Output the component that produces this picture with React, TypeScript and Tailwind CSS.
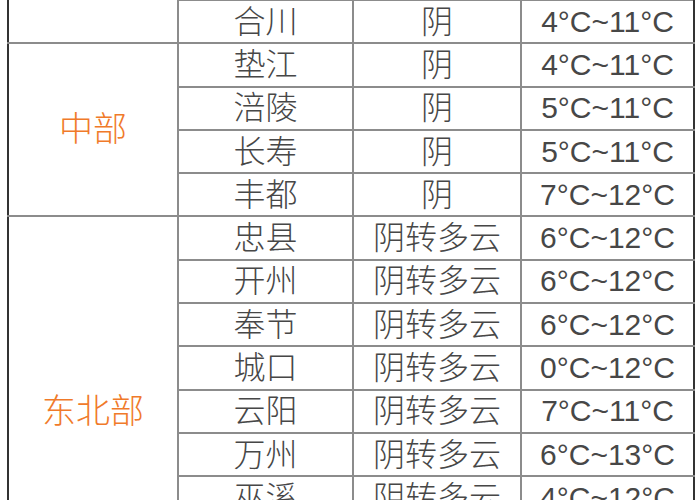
const groups = [
  {
    label: "",
    rows: [["合川", "阴", "4°C~11°C"]],
    continued: true,
  },
  {
    label: "中部",
    rows: [
      ["垫江", "阴", "4°C~11°C"],
      ["涪陵", "阴", "5°C~11°C"],
      ["长寿", "阴", "5°C~11°C"],
      ["丰都", "阴", "7°C~12°C"],
    ],
  },
  {
    label: "东北部",
    rows: [
      ["忠县", "阴转多云", "6°C~12°C"],
      ["开州", "阴转多云", "6°C~12°C"],
      ["奉节", "阴转多云", "6°C~12°C"],
      ["城口", "阴转多云", "0°C~12°C"],
      ["云阳", "阴转多云", "7°C~11°C"],
      ["万州", "阴转多云", "6°C~13°C"],
      ["巫溪", "阴转多云", "4°C~12°C"],
      ["巫山", "阴转多云", "5°C~12°C"],
      ["梁平", "阴转多云", "5°C~11°C"],
    ],
  },
]

const cell = "border-2 border-[#8c8c8c] text-center p-0 align-middle"

export default function App() {
  return (
    <div
      className="w-[700px] h-[500px] overflow-hidden bg-white pl-[7px] text-[#474747] font-light"
      style={{ fontFamily: '"Liberation Sans", "Noto Sans CJK SC", sans-serif' }}
    >
      <table className="table-fixed border-collapse w-[686px] -mt-[1px]">
        <colgroup>
          <col className="w-[170px]" />
          <col className="w-[175px]" />
          <col className="w-[168px]" />
          <col className="w-[173px]" />
        </colgroup>
        <tbody>
          {groups.map((g, gi) =>
            g.rows.map((r, ri) => (
              <tr key={`${gi}-${ri}`} className="h-[43.3px]">
                {ri === 0 && (
                  <td
                    rowSpan={g.rows.length}
                    className={`${cell} border-l-[#333] text-[34px] text-[#f07a2a] ${g.continued ? "border-t-0" : ""}`}
                  >
                    {g.label}
                  </td>
                )}
                <td className={`${cell} text-[32px] leading-none`}>{r[0]}</td>
                <td className={`${cell} text-[32px] leading-none`}>{r[1]}</td>
                <td className={`${cell} border-r-[#333] text-[30px] leading-none`}>{r[2]}</td>
              </tr>
            ))
          )}
        </tbody>
      </table>
    </div>
  )
}
